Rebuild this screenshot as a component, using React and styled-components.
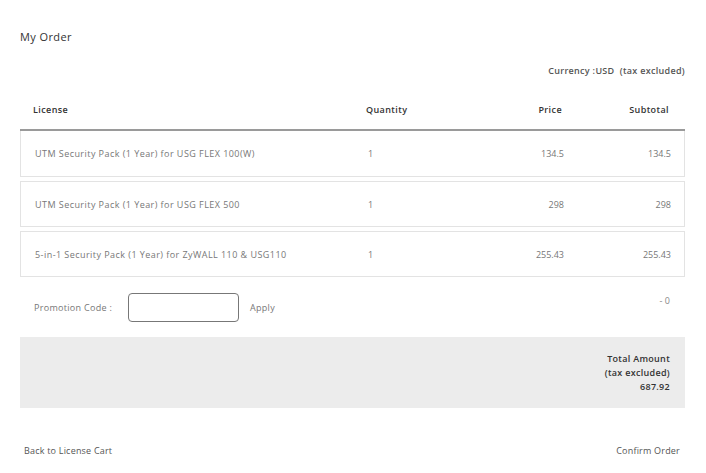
import React from "react";
import styled, { createGlobalStyle } from "styled-components";

const Global = createGlobalStyle`
  html, body { margin: 0; padding: 0; background: #fff; }
  body { font-family: "Open Sans", "Noto Sans", sans-serif; color: #333; }
  * { box-sizing: border-box; }
`;

const Page = styled.div`
  width: 706px;
  padding: 30px 21px 0 20px;
`;

const Title = styled.div`
  font-size: 11px;
  color: #333;
  letter-spacing: 0.4px;
  line-height: 14px;
`;

const Currency = styled.div`
  margin-top: 21px;
  text-align: right;
  font-size: 9px;
  font-weight: 600;
  color: #555;
  line-height: 12px;
  letter-spacing: 0.3px;
  white-space: pre;
`;

const Grid = styled.div`
  display: grid;
  grid-template-columns: 333px 96px 100px 107px;
  align-items: center;
  padding: 0 14px 0 13px;
`;

const HeadRow = styled(Grid)`
  height: 54px;
  padding-top: 13px;
  border-bottom: 2px solid #9a9a9a;
`;

const HeadCell = styled.div`
  font-size: 9px;
  font-weight: 600;
  color: #333;
  letter-spacing: 0.4px;
  text-align: ${(p) => (p.$right ? "right" : "left")};
`;

const Row = styled(Grid)`
  height: 46px;
  border: 1px solid #e3e3e3;
  border-top-width: ${(p) => (p.$first ? "0" : "1px")};
  margin-top: ${(p) => (p.$first ? "0" : "4px")};
  padding-left: 14px;
`;

const Cell = styled.div`
  font-size: 9px;
  color: #777;
  letter-spacing: ${(p) => (p.$num ? "0" : "0.45px")};
  text-align: ${(p) => (p.$num ? "right" : "left")};
  white-space: nowrap;
`;

const PromoRow = styled.div`
  display: flex;
  align-items: flex-start;
  justify-content: space-between;
  padding: 16px 15px 0 14px;
  height: 60px;
`;

const PromoLeft = styled.div`
  display: flex;
  align-items: center;
`;

const PromoLabel = styled.span`
  width: 94px;
  font-size: 9px;
  color: #777;
  letter-spacing: 0.3px;
`;

const PromoInput = styled.input`
  width: 111px;
  height: 29px;
  border: 1px solid #777;
  border-radius: 4px;
  outline: none;
  margin: 0;
`;

const ApplyText = styled.span`
  font-size: 9px;
  color: #777;
  margin-left: 11px;
  letter-spacing: 0.3px;
`;

const Discount = styled.span`
  font-size: 9px;
  color: #888;
  margin-top: 1px;
`;

const TotalBox = styled.div`
  background: #ececec;
  height: 71px;
  padding: 15px 15px 0 0;
  text-align: right;
  font-size: 9px;
  font-weight: 600;
  color: #333;
  line-height: 14px;
  letter-spacing: 0.3px;
`;

const Footer = styled.div`
  display: flex;
  justify-content: space-between;
  padding: 36px 5px 0 4px;
`;

const FooterLink = styled.span`
  font-size: 9px;
  color: #555;
  letter-spacing: 0.2px;
`;

const items = [
  { name: "UTM Security Pack (1 Year) for USG FLEX 100(W)", qty: 1, price: "134.5", sub: "134.5" },
  { name: "UTM Security Pack (1 Year) for USG FLEX 500", qty: 1, price: "298", sub: "298" },
  { name: "5-in-1 Security Pack (1 Year) for ZyWALL 110 & USG110", qty: 1, price: "255.43", sub: "255.43" },
];

export default function App() {
  return (
    <>
      <Global />
      <Page>
        <Title>My Order</Title>
        <Currency>{"Currency :USD  (tax excluded)"}</Currency>
        <HeadRow>
          <HeadCell>License</HeadCell>
          <HeadCell>Quantity</HeadCell>
          <HeadCell $right>Price</HeadCell>
          <HeadCell $right>Subtotal</HeadCell>
        </HeadRow>
        {items.map((it, i) => (
          <Row key={i} $first={i === 0}>
            <Cell>{it.name}</Cell>
            <Cell>{it.qty}</Cell>
            <Cell $num>{it.price}</Cell>
            <Cell $num>{it.sub}</Cell>
          </Row>
        ))}
        <PromoRow>
          <PromoLeft>
            <PromoLabel>Promotion Code :</PromoLabel>
            <PromoInput type="text" />
            <ApplyText>Apply</ApplyText>
          </PromoLeft>
          <Discount>- 0</Discount>
        </PromoRow>
        <TotalBox>
          <div>Total Amount</div>
          <div>(tax excluded)</div>
          <div>687.92</div>
        </TotalBox>
        <Footer>
          <FooterLink>Back to License Cart</FooterLink>
          <FooterLink>Confirm Order</FooterLink>
        </Footer>
      </Page>
    </>
  );
}
